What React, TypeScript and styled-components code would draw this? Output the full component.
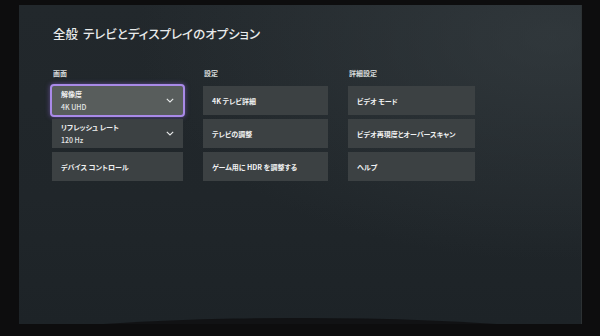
import styled, { createGlobalStyle } from "styled-components";

const GlobalStyle = createGlobalStyle`
  html, body {
    margin: 0;
    padding: 0;
    background: #0c0c0d;
  }
  body {
    font-family: "Noto Sans CJK JP", "Noto Sans", sans-serif;
    font-feature-settings: "palt";
  }
`;

const Room = styled.div`
  width: 600px;
  height: 336px;
  background: #0d0d0e;
  padding: 5px 18px 12px 19px;
  box-sizing: border-box;
  overflow: hidden;
`;

const Screen = styled.div`
  position: relative;
  height: 100%;
  box-sizing: border-box;
  padding: 21px 0 0 34px;
  background:
    radial-gradient(ellipse at 95% 10%, rgba(60, 68, 72, 0.55), transparent 55%),
    linear-gradient(180deg, #22282c 0%, #20262a 60%, #1d2327 100%);
  border-right: 1px solid #2c3133;
  overflow: hidden;

  &::after {
    content: "";
    position: absolute;
    left: -10%;
    right: -10%;
    bottom: -26px;
    height: 32px;
    border-radius: 50% 50% 0 0 / 100% 100% 0 0;
    background: #111214;
  }
`;

const Title = styled.h1`
  margin: 0;
  font-size: 12.5px;
  line-height: 16px;
  font-weight: 500;
  color: #e9ebeb;
  display: flex;
  gap: 5px;
`;

const Columns = styled.div`
  display: grid;
  grid-template-columns: 131px 125px 127px;
  column-gap: 20px;
  margin-top: 26px;
  margin-left: -1px;
`;

const Column = styled.div`
  display: flex;
  flex-direction: column;
  gap: 4px;
`;

const Heading = styled.div`
  font-size: 7px;
  font-weight: 700;
  color: #d8dcdc;
  height: 13px;
  line-height: 10px;
  padding-left: 1px;
  margin-bottom: 1px;
`;

const Tile = styled.div<{ $focused?: boolean }>`
  position: relative;
  height: 29px;
  box-sizing: border-box;
  padding: 0 9px;
  display: flex;
  align-items: center;
  justify-content: space-between;
  background: ${(p) => (p.$focused ? "#585d5c" : "#3c4143")};
  color: #f1f2f2;
  font-size: 7px;
  font-weight: 700;
  ${(p) =>
    p.$focused &&
    `
    outline: 2px solid #a98ae8;
    box-shadow: 0 0 5px 2px rgba(150, 110, 230, 0.55);
    border-radius: 2px;
  `}
`;

const Lines = styled.div`
  display: flex;
  flex-direction: column;
  gap: 5px;
  line-height: 8px;
`;

const Value = styled.span`
  font-weight: 500;
  color: #e4e6e6;
`;

const Chevron = () => (
  <svg width="8" height="5" viewBox="0 0 8 5" fill="none">
    <path d="M0.8 0.8 L4 4 L7.2 0.8" stroke="#e8eaea" strokeWidth="1.1" />
  </svg>
);

type Item = { label: string; value?: string; focused?: boolean };

const columns: { heading: string; items: Item[] }[] = [
  {
    heading: "画面",
    items: [
      { label: "解像度", value: "4K UHD", focused: true },
      { label: "リフレッシュ レート", value: "120 Hz" },
      { label: "デバイス コントロール" },
    ],
  },
  {
    heading: "設定",
    items: [
      { label: "4K テレビ詳細" },
      { label: "テレビの調整" },
      { label: "ゲーム用に HDR を調整する" },
    ],
  },
  {
    heading: "詳細設定",
    items: [
      { label: "ビデオ モード" },
      { label: "ビデオ再現度とオーバースキャン" },
      { label: "ヘルプ" },
    ],
  },
];

export default function App() {
  return (
    <>
      <GlobalStyle />
      <Room>
        <Screen>
          <Title>
            <span>全般</span>
            <span>テレビとディスプレイのオプション</span>
          </Title>
          <Columns>
            {columns.map((col) => (
              <Column key={col.heading}>
                <Heading>{col.heading}</Heading>
                {col.items.map((item) => (
                  <Tile key={item.label} $focused={item.focused}>
                    {item.value ? (
                      <>
                        <Lines>
                          <span>{item.label}</span>
                          <Value>{item.value}</Value>
                        </Lines>
                        <Chevron />
                      </>
                    ) : (
                      <span>{item.label}</span>
                    )}
                  </Tile>
                ))}
              </Column>
            ))}
          </Columns>
        </Screen>
      </Room>
    </>
  );
}
